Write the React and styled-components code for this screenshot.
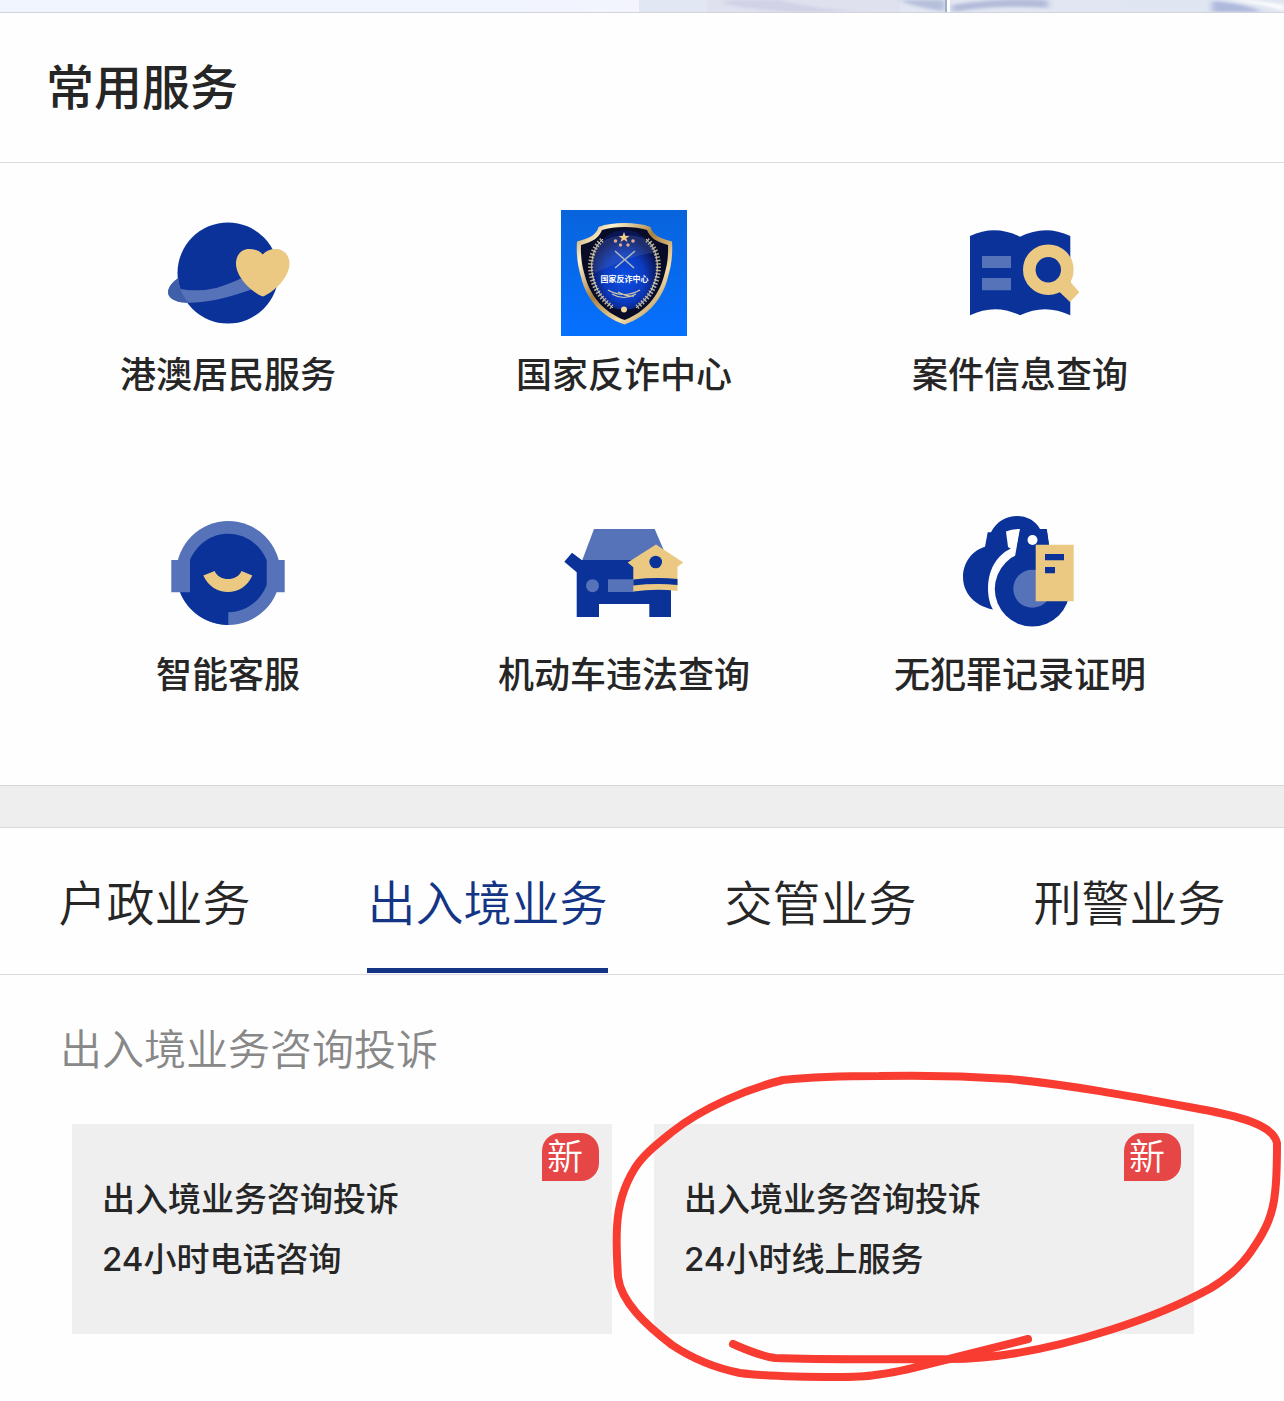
import { useState } from "react";
import styled, { createGlobalStyle } from "styled-components";

const NAVY = "#0a3299";
const STEEL = "#5673b9";
const GOLD = "#ebc983";

const GlobalStyle = createGlobalStyle`
  *{
    box-sizing: border-box;
  }
  body{
    margin: 0;
    background-color: #fefefe;
    color: #262626;
    font-family: Inter, "Noto Sans CJK SC", sans-serif;
  }
  a{
    color: inherit;
    text-decoration: none;
  }
`;

const PlanetIcon = () => (
  <Icon viewBox="0 0 126 126" aria-hidden="true">
    <circle cx="63" cy="63" r="50.5" fill={NAVY} />
    <path d="M13.300 68C6 73 3 78 3 83C4 90 14 93 26 92.700C48 92 68 86 88 79L76 68.500C64 74 50 80 34 80.300C27 80.500 20 80 15.500 79C14 75 13.300 72 13.300 68Z" fill={STEEL} />
    <path d="M13.300 68C6 73 3 78 3 83C4 90 14 93 24 92.700C20 89 17 84 15.500 79C14 75 13.300 72 13.300 68Z" fill="#405fa9" />
    <path d="M97.700 86.500C90 84 71 69 71 53.500C71 44.500 77 39 84 39C90 39 95 41 97.700 44.500C100.500 41 105 39 111 39C118.500 39 124.500 45 124.500 53.500C124.500 69 106 84 97.700 86.500Z" fill={GOLD} />
  </Icon>
);

const ShieldIcon = () => (
  <Icon viewBox="0 0 126 126" aria-hidden="true">
    <defs>
      <linearGradient id="shieldBack" x1="0" y1="0" x2="0" y2="1">
        <stop offset="0" stopColor="#0864dc" />
        <stop offset="1" stopColor="#0670ff" />
      </linearGradient>
      <linearGradient id="shieldRim" x1="0" y1="0" x2="1" y2="1">
        <stop offset="0" stopColor="#b58c4c" />
        <stop offset="0.200" stopColor="#fff3cf" />
        <stop offset="0.450" stopColor="#a9803f" />
        <stop offset="0.700" stopColor="#f5dfa8" />
        <stop offset="1" stopColor="#8b6128" />
      </linearGradient>
      <radialGradient id="shieldFace" cx="0.500" cy="0.600" r="0.500">
        <stop offset="0" stopColor="#0b50e4" />
        <stop offset="0.600" stopColor="#0c3bc0" />
        <stop offset="1" stopColor="#0a1554" />
      </radialGradient>
    </defs>
    <rect width="126" height="126" fill="url(#shieldBack)" />
    <path d="M63.500 13C54 13 45 14 37.500 17C36 23 31 28 16 31.500C15 45 17 57 20 67C25 88 39 106 63.500 114.500C88 106 102 88 107 67C110 57 112 45 111 31.500C96 28 91 23 89.500 17C82 14 73 13 63.500 13Z" fill="url(#shieldRim)" />
    <path d="M63.500 17C55 17 47 18 41 20C38 28 31 32 20 35C19.500 47 21 56 24 66C29 85 42 102 63.500 110C85 102 98 85 103 66C106 56 107.500 47 107 35C96 32 89 28 86 20C80 18 72 17 63.500 17Z" fill="#080c27" />
    <ellipse cx="63.500" cy="60" rx="34" ry="40" fill="url(#shieldFace)" />
    <path d="M32 45C36 20 91 18 96 43C78 43 61 51 34 63C31 58 31 51 32 45Z" fill="#6076b6" opacity="0.250" />
    <g fill="none" stroke="#d5c9a5">
      <path d="M42 29C25 43 26 78 52 98M85 29C102 43 101 78 75 98" strokeWidth="1" />
      <path d="M41 30C24 44 25 78 51 97M86 30C103 44 102 78 76 97" strokeWidth="5" strokeDasharray="1.500 1.800" opacity="0.850" />
      <path d="M54 41L73 58M74 41L54 58" stroke="#aeb8bd" strokeWidth="1.500" />
      <path d="M47 80Q63 89 79 80M51 84Q63 91 75 84M57 82Q66 87 73 86" strokeWidth="1.200" />
    </g>
    <path d="M63 22L64.500 26H68.500L65.300 28.300L66.500 32L63 29.700L59.500 32L60.700 28.300L57.500 26H61.500Z" fill="#f4cc87" />
    <g fill="#dcab93">
      <circle cx="54.500" cy="31" r="1.800" />
      <circle cx="59.500" cy="35" r="1.700" />
      <circle cx="67" cy="35" r="1.700" />
      <circle cx="72" cy="31" r="1.800" />
    </g>
    <circle cx="63" cy="99.500" r="3" fill="#f2d59b" />
    <ShieldText x="63.500" y="72">国家反诈中心</ShieldText>
  </Icon>
);

const BookSearchIcon = () => (
  <Icon viewBox="0 0 126 126" aria-hidden="true">
    <path d="M13 26Q38 14 63 26.700Q88 14 113.300 26V105.300Q88 93 63 105.300Q38 93 13 105.300Z" fill={NAVY} />
    <path d="M25 46H54V58H25ZM25 68H54V80.300H25Z" fill={STEEL} />
    <path d="M101 80.500L113.500 72L122.300 82.300L113 92Z" fill={GOLD} />
    <circle cx="91.300" cy="59.700" r="19" fill={NAVY} stroke={GOLD} strokeWidth="12.600" />
  </Icon>
);

const HeadsetIcon = () => (
  <Icon viewBox="0 0 126 126" aria-hidden="true">
    <circle cx="63.300" cy="63" r="52" fill={STEEL} />
    <path d="M6.300 50H30V82.300H6.300ZM98 50H119.700V82.300H98Z" fill={STEEL} />
    <path d="M25 50C32 34 46 23.700 63.300 23.700C80 23.700 95 34 101.700 50V75C95 92 80 102.300 63.300 102.300V115C42 115 23 102 15 82.300H25Z" fill={NAVY} />
    <path d="M38.300 65.500L49.700 61C54 71.700 72 71.700 76.500 61L87.300 65.500C78 87.500 48 87.500 38.300 65.500Z" fill={GOLD} />
  </Icon>
);

const CarIcon = () => (
  <Icon viewBox="0 0 126 126" aria-hidden="true">
    <path d="M33 19H93.700L107 50H21.300Z" fill={STEEL} />
    <path d="M11 42.700L20.700 50H110V107H88.300V94H38V107H15.700V62.300L3.300 51.700Z" fill={NAVY} />
    <circle cx="31.500" cy="75.700" r="6.500" fill={STEEL} />
    <path d="M47 69.300H73V82H47Z" fill={STEEL} />
    <path d="M95 34.500L122.300 52.500L116.500 56.700V81Q95 78.500 72.300 81.500V57.300L66.700 52.500Z" fill={GOLD} />
    <circle cx="94.700" cy="52" r="6.300" fill={NAVY} />
    <path d="M72.300 69.500Q95 67 116.500 69V75Q95 73 72.300 75.500Z" fill={NAVY} />
  </Icon>
);

const HandcuffIcon = () => (
  <Icon viewBox="0 0 126 126" aria-hidden="true">
    <path d="M30.700 22.300H34C44 1 74 1 83 19H89.700L93 42L48 54L46 100C24 101 6 87 6 67C6 52 16 40 28 36.700Z" fill={NAVY} />
    <path d="M49 21.500Q55 18.500 63.300 19L59 42L51 37Z" fill="#fefefe" />
    <path d="M62 36C42 40 31 58 31 78C31 87 33 96 37 101L49 106L60 48Z" fill="#fefefe" />
    <circle cx="75.300" cy="79" r="37.500" fill={NAVY} />
    <path d="M63 19H89.700L94 49H57.500Z" fill={NAVY} />
    <circle cx="75.500" cy="30" r="5" fill="#fefefe" />
    <circle cx="75.300" cy="78.700" r="19" fill={STEEL} />
    <path d="M78.700 34.700H116.700V91.300H78.700Z" fill={GOLD} />
    <path d="M88 44H107V50.300H88ZM88 57H98V63.300H88Z" fill={NAVY} />
  </Icon>
);

const services = [
  { name: "港澳居民服务", Picture: PlanetIcon },
  { name: "国家反诈中心", Picture: ShieldIcon },
  { name: "案件信息查询", Picture: BookSearchIcon },
  { name: "智能客服", Picture: HeadsetIcon },
  { name: "机动车违法查询", Picture: CarIcon },
  { name: "无犯罪记录证明", Picture: HandcuffIcon },
];

const tabs = ["户政业务", "出入境业务", "交管业务", "刑警业务"];

const cards = [
  { lines: ["出入境业务咨询投诉", "24小时电话咨询"] },
  { lines: ["出入境业务咨询投诉", "24小时线上服务"], marked: true },
];

const BannerArt = () => (
  <svg viewBox="0 0 1284 12" preserveAspectRatio="none" aria-hidden="true">
    <defs>
      <linearGradient id="sky">
        <stop offset="0" stopColor="#f0f5ff" />
        <stop offset="0.400" stopColor="#f1f5ff" />
        <stop offset="0.500" stopColor="#f3f4fe" />
      </linearGradient>
      <linearGradient id="wall">
        <stop offset="0" stopColor="#e1e7f3" />
        <stop offset="0.500" stopColor="#e2e6f2" />
        <stop offset="1" stopColor="#dfe6f1" />
      </linearGradient>
      <filter id="soft"><feGaussianBlur stdDeviation="3 1.500" /></filter>
    </defs>
    <rect width="1284" height="12" fill="url(#sky)" />
    <path d="M639 0H1284V12H639Z" fill="url(#wall)" />
    <path d="M707 0H900V12H707Z" fill="#dfe1ef" />
    <g filter="url(#soft)">
      <path d="M725 0H780Q810 8 860 12H790Q740 8 725 4Z" fill="#d1d2e6" />
      <path d="M900 0H945V11Q915 8 900 0Z" fill="#b5c0db" />
      <path d="M952 5Q1000 -3 1048 0V8Q1000 4 952 12Z" fill="#b3bbd9" />
      <path d="M1212 1Q1245 3 1262 12H1212Z" fill="#afb9dd" />
      <path d="M1225 0Q1270 4 1284 12V5L1250 0Z" fill="#fff" />
    </g>
    <path d="M947 0H950V12H947Z" fill="#fff" />
    <path d="M945 0H947V12H945Z" fill="#9eb0c5" />
  </svg>
);

const HandDrawnCircle = () => (
  <Marker viewBox="614 1072 670 310" aria-hidden="true">
    <path d="M733 1344C747 1350 760 1356 775 1358C830 1360 890 1359 949 1359C1005 1359 1060 1346 1110 1330C1145 1319 1182 1304 1211 1288C1231 1276 1244 1263 1254 1247C1267 1228 1273 1213 1275 1193C1277 1177 1277 1158 1277 1143C1275 1133 1265 1127 1252 1122C1234 1115 1212 1111 1189 1107C1130 1096 1070 1085 1010 1079C966 1076 923 1075 879 1076C846 1076 812 1077 783 1080C763 1085 743 1092 726 1100C704 1110 687 1120 672 1132C656 1145 643 1155 635 1168C623 1187 618 1207 617 1227C616 1244 617 1261 618 1277C621 1302 646 1325 672 1345C693 1359 715 1368 740 1373C771 1377 804 1377 836 1377C849 1377 863 1377 875 1375C903 1372 928 1364 953 1358L1028 1339" />
  </Marker>
);

const App = () => {
  const [active, setActive] = useState(1);

  return (
    <>
      <GlobalStyle />
      <Banner><BannerArt /></Banner>
      <main>
        <section>
          <SectionTitle>常用服务</SectionTitle>
          <ServiceGrid>
            {services.map(({ name, Picture }) => (
              <li key={name}>
                <ServiceLink href="#">
                  <Picture />
                  <span>{name}</span>
                </ServiceLink>
              </li>
            ))}
          </ServiceGrid>
        </section>
        <Divider />
        <section>
          <TabBar role="tablist">
            {tabs.map((tab, i) => (
              <Tab key={tab} type="button" role="tab" aria-selected={i === active} $active={i === active} onClick={() => setActive(i)}>
                {tab}
              </Tab>
            ))}
          </TabBar>
          <GroupTitle>出入境业务咨询投诉</GroupTitle>
          <CardList>
            {cards.map(({ lines, marked }) => (
              <CardItem key={lines[1]}>
                <Card href="#">
                  {lines.map((line) => <p key={line}>{line}</p>)}
                  <Badge>新</Badge>
                </Card>
                {marked && <HandDrawnCircle />}
              </CardItem>
            ))}
          </CardList>
        </section>
      </main>
    </>
  );
};

export default App;

const Banner = styled.header`
  border-bottom: 1px solid #d3d5dc;
  svg{
    display: block;
    width: 100%;
    height: 12px;
  }
`;

const SectionTitle = styled.h1`
  margin: 0;
  padding: 39px 46px 38px;
  border-bottom: 1px solid #dcdcdc;
  font-size: 48px;
  font-weight: 500;
  line-height: 72px;
`;

const ServiceGrid = styled.ul`
  display: grid;
  grid-template-columns: repeat(3, 1fr);
  margin: 0;
  padding: 0 66px 22px 30px;
  list-style: none;
`;

const ServiceLink = styled.a`
  display: flex;
  flex-direction: column;
  align-items: center;
  gap: 12px;
  padding: 47px 0 61px;
  font-size: 36px;
  font-weight: 500;
  line-height: 54px;
`;

const Icon = styled.svg`
  display: block;
  width: 126px;
  height: 126px;
`;

const ShieldText = styled.text`
  fill: #fff;
  font-size: 8px;
  font-weight: 700;
  text-anchor: middle;
`;

const Divider = styled.div`
  height: 43px;
  border-top: 1px solid #d6d6d6;
  border-bottom: 1px solid #d9d9d9;
  background-color: #eee;
`;

const TabBar = styled.div`
  display: flex;
  justify-content: space-around;
  padding-bottom: 1px;
  border-bottom: 1px solid #dcdcdc;
`;

const Tab = styled.button`
  padding: 40px 0 28px;
  border: 0;
  border-bottom: 5px solid ${({ $active }) => ($active ? "#143585" : "transparent")};
  background: none;
  color: ${({ $active }) => ($active ? "#143585" : "inherit")};
  font-family: inherit;
  font-size: 48px;
  font-weight: 350;
  line-height: 72px;
  cursor: pointer;
`;

const GroupTitle = styled.h2`
  margin: 0;
  padding: 45px 60px 44px;
  color: #888;
  font-size: 42px;
  font-weight: 350;
  line-height: 60px;
`;

const CardList = styled.ul`
  display: grid;
  grid-template-columns: repeat(2, 1fr);
  gap: 42px;
  margin: 0;
  padding: 0 90px 67px 72px;
  list-style: none;
`;

const CardItem = styled.li`
  position: relative;
`;

const Card = styled.a`
  display: block;
  padding: 45px 30px;
  background-color: #efefef;
  font-size: 33px;
  font-weight: 500;
  line-height: 60px;
  p{
    margin: 0;
  }
`;

const Badge = styled.span`
  position: absolute;
  top: 9px;
  right: 13px;
  width: 57px;
  padding-left: 5px;
  border-radius: 18px 18px 18px 0;
  background-color: #e64645;
  color: #fff;
  font-size: 36px;
  font-weight: 350;
  line-height: 48px;
`;

const Marker = styled.svg`
  position: absolute;
  top: -52px;
  left: -40px;
  width: 670px;
  height: 310px;
  overflow: visible;
  pointer-events: none;
  path{
    fill: none;
    stroke: #f93c31;
    stroke-width: 8px;
    stroke-linecap: round;
    stroke-linejoin: round;
  }
`;
